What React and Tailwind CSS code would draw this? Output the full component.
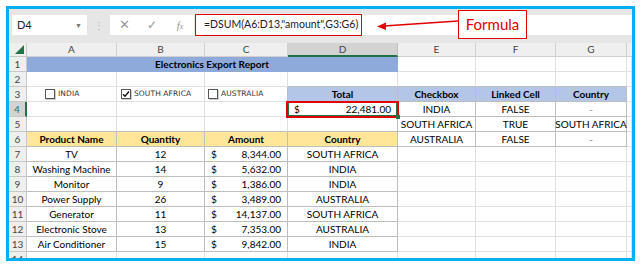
import React from 'react';
import { twMerge } from 'tailwind-merge';

const products = [
  ['TV', 12, '8,344.00', 'SOUTH AFRICA'],
  ['Washing Machine', 14, '5,632.00', 'INDIA'],
  ['Monitor', 9, '1,386.00', 'INDIA'],
  ['Power Supply', 26, '3,489.00', 'AUSTRALIA'],
  ['Generator', 11, '14,137.00', 'SOUTH AFRICA'],
  ['Electronic Stove', 13, '7,353.00', 'AUSTRALIA'],
  ['Air Conditioner', 15, '9,842.00', 'INDIA'],
];

const linked = [
  ['INDIA', 'FALSE', '-'],
  ['SOUTH AFRICA', 'TRUE', 'SOUTH AFRICA'],
  ['AUSTRALIA', 'FALSE', '-'],
];

// one spreadsheet cell, gridline on right + bottom
const Cell = ({ children, className = '' }) => (
  <div
    className={twMerge(
      'h-[15px] border-r border-b border-[#e1e1e1] flex items-center justify-center overflow-visible whitespace-nowrap text-[10px] leading-none text-black',
      className
    )}
  >
    {children}
  </div>
);

const RowNum = ({ n, active }) => (
  <div
    className={twMerge(
      'h-[15px] border-r border-b border-[#c8c8c8] bg-[#efefef] flex items-center justify-center text-[10px] leading-none text-[#444]',
      active && 'bg-[#d3d3d3] border-r-2 border-r-[#217346] text-[#217346]'
    )}
  >
    {n}
  </div>
);

const Money = ({ value, className = '' }) => (
  <Cell className={twMerge('justify-between px-[6px]', className)}>
    <span>$</span>
    <span>{value}</span>
  </Cell>
);

const Check = ({ label, checked, className = '' }) => (
  <div className={twMerge('flex items-center gap-[3px]', className)}>
    <div className="w-[10px] h-[10px] border border-[#555] bg-white flex items-center justify-center shadow-[1px_1px_0_#ccc]">
      {checked && (
        <svg width="8" height="8" viewBox="0 0 8 8">
          <path d="M1 4.2 L3 6.2 L7 1.5" fill="none" stroke="#111" strokeWidth="1.4" />
        </svg>
      )}
    </div>
    <span className="text-[7.5px] text-[#333] tracking-[0.1px]" style={{ fontFamily: '"DejaVu Sans", sans-serif' }}>
      {label}
    </span>
  </div>
);

const tb = 'border-[#bdbdbd]';

export default function App() {
  return (
    <div
      className="w-[640px] h-[270px] bg-white relative pt-[6px] pl-[6px]"
      style={{ fontFamily: 'Lato, "Open Sans", sans-serif' }}
    >
      <div className="w-[629px] h-[255px] border-[3px] border-[#00b0f0] overflow-hidden flex flex-col bg-white">
        {/* formula bar */}
        <div className="h-[34px] bg-[#e6e6e6] flex items-start pt-[6px] pl-[3px] shrink-0">
          <div className="w-[75px] h-[20px] bg-white flex items-center justify-between px-[5px]">
            <span className="text-[11px] text-[#222]">D4</span>
            <span className="text-[7px] text-[#777]">▼</span>
          </div>
          <div className="w-[23px] h-[20px] flex items-center justify-center text-[10px] text-[#aaa]">⋮</div>
          <div className="w-[84px] h-[20px] bg-white flex items-center text-[#999]">
            <span className="w-[28px] text-center text-[13px] font-light">✕</span>
            <span className="w-[28px] text-center text-[12px]">✓</span>
            <span className="w-[28px] text-center text-[11px] italic" style={{ fontFamily: '"Liberation Serif", serif' }}>
              f<span className="text-[8px]">x</span>
            </span>
          </div>
          <div className="flex-1 h-[20px] bg-white ml-[1px] flex items-center">
            <div className="h-[22px] w-[167px] -mt-[1px] border border-[#e00000] flex items-center pl-[8px] text-[10.5px] text-[#222] whitespace-nowrap">
              =DSUM(A6:D13,"amount",G3:G6)
            </div>
          </div>
        </div>

        {/* sheet grid */}
        <div className="grid grid-cols-[18px_90px_88px_83px_110px_78px_80px_71px_1fr] grid-rows-[14px] auto-rows-[15px]">
          {/* column headers */}
          <div className="h-[14px] bg-[#efefef] border-r border-b border-[#c8c8c8] relative">
            <div className="absolute right-[2px] bottom-[2px] w-0 h-0 border-l-[9px] border-l-transparent border-b-[9px] border-b-[#217346]" />
          </div>
          {['A', 'B', 'C'].map((c) => (
            <div key={c} className="h-[14px] bg-[#efefef] border-r border-b border-[#d0d0d0] flex items-center justify-center text-[10px] text-[#444]">
              {c}
            </div>
          ))}
          <div className="h-[14px] bg-[#d3d3d3] border-r border-[#c0c0c0] border-b-2 border-b-[#217346] flex items-center justify-center text-[10px] text-[#444]">
            D
          </div>
          {['E', 'F', 'G'].map((c) => (
            <div key={c} className="h-[14px] bg-[#efefef] border-r border-b border-[#d0d0d0] flex items-center justify-center text-[10px] text-[#444]">
              {c}
            </div>
          ))}
          <div className="h-[14px] bg-[#efefef] border-b border-[#d0d0d0]" />

          {/* row 1 */}
          <RowNum n={1} />
          <Cell className="col-span-4 bg-[#8eaadb] font-bold border-[#8eaadb]">Electronics Export Report</Cell>
          <Cell />
          <Cell />
          <Cell />
          <Cell />

          {/* row 2 */}
          <RowNum n={2} />
          <Cell />
          <Cell />
          <Cell />
          <Cell className="border-b-[#bdbdbd]" />
          <Cell className="border-b-[#bdbdbd]" />
          <Cell className="border-b-[#bdbdbd]" />
          <Cell className="border-b-[#bdbdbd]" />
          <Cell />

          {/* row 3 */}
          <RowNum n={3} />
          <Cell className="justify-start pl-[18px]">
            <Check label="INDIA" />
          </Cell>
          <Cell className="justify-start pl-[4px]">
            <Check label="SOUTH AFRICA" checked />
          </Cell>
          <Cell className="justify-start pl-[3px] border-r-[#bdbdbd]">
            <Check label="AUSTRALIA" />
          </Cell>
          <Cell className={`bg-[#b4c6e7] font-bold ${tb}`}>Total</Cell>
          <Cell className={`bg-[#b4c6e7] font-bold ${tb}`}>Checkbox</Cell>
          <Cell className={`bg-[#b4c6e7] font-bold ${tb}`}>Linked Cell</Cell>
          <Cell className={`bg-[#b4c6e7] font-bold ${tb}`}>Country</Cell>
          <Cell />

          {/* row 4 */}
          <RowNum n={4} active />
          <Cell />
          <Cell />
          <Cell className="border-r-[#bdbdbd]" />
          <div className="h-[15px] relative border-r border-b border-[#bdbdbd]">
            <div className="absolute -left-[2px] -top-[1px] -right-[2px] -bottom-[2px] border-2 border-[#e00000] z-10" />
            <div className="absolute inset-0 border border-[#217346] flex items-center justify-between px-[5px] text-[10px] leading-none">
              <span>$</span>
              <span>22,481.00</span>
            </div>
            <div className="absolute -right-[3px] -bottom-[3px] w-[4px] h-[4px] bg-[#217346] z-20" />
          </div>
          {linked[0].map((v, i) => (
            <Cell key={i} className={`${tb} ${v === '-' ? 'text-[#888]' : ''}`}>{v}</Cell>
          ))}
          <Cell />

          {/* row 5 */}
          <RowNum n={5} />
          <Cell className="border-b-[#bdbdbd]" />
          <Cell className="border-b-[#bdbdbd]" />
          <Cell className="border-b-[#bdbdbd]" />
          <Cell className="border-r-[#bdbdbd] border-b-[#bdbdbd]" />
          {linked[1].map((v, i) => (
            <Cell key={i} className={tb}>{v}</Cell>
          ))}
          <Cell />

          {/* row 6: table header */}
          <RowNum n={6} />
          <Cell className={`bg-[#ffe699] font-bold ${tb}`}>Product Name</Cell>
          <Cell className={`bg-[#ffe699] font-bold ${tb}`}>Quantity</Cell>
          <Cell className={`bg-[#ffe699] font-bold ${tb}`}>Amount</Cell>
          <Cell className={`bg-[#ffe699] font-bold ${tb}`}>Country</Cell>
          {linked[2].map((v, i) => (
            <Cell key={i} className={`${tb} ${v === '-' ? 'text-[#888]' : ''}`}>{v}</Cell>
          ))}
          <Cell />

          {/* rows 7-13 */}
          {products.map(([name, qty, amt, country], i) => (
            <React.Fragment key={name}>
              <RowNum n={i + 7} />
              <Cell className={tb}>{name}</Cell>
              <Cell className={tb}>{qty}</Cell>
              <Money value={amt} className={tb} />
              <Cell className={tb}>{country}</Cell>
              <Cell />
              <Cell />
              <Cell />
              <Cell />
            </React.Fragment>
          ))}

          {/* row 14, cut off by the frame */}
          <RowNum n={14} />
          <Cell />
          <Cell />
          <Cell />
          <Cell />
          <Cell />
          <Cell />
          <Cell />
          <Cell />
        </div>
      </div>

      {/* callout arrow and label */}
      <svg className="absolute left-0 top-0 pointer-events-none" width="640" height="270">
        <line x1="458" y1="21" x2="384" y2="26" stroke="#e00000" strokeWidth="1.3" />
        <polygon points="377,26.5 386,22.5 386,30" fill="#e00000" />
      </svg>
      <div className="absolute left-[458px] top-[10px] w-[69px] h-[29px] bg-white border-[1.5px] border-[#e00000] flex items-center justify-center text-[15px] text-[#e00000]">
        Formula
      </div>
    </div>
  );
}
